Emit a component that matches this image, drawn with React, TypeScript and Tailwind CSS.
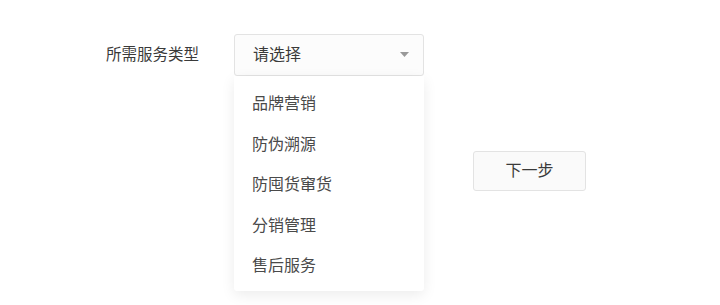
import * as React from 'react';

const options = ['品牌营销', '防伪溯源', '防囤货窜货', '分销管理', '售后服务'];

export default function App() {
  return (
    <div
      className="w-[720px] h-[305px] bg-white text-[#333] overflow-hidden"
      style={{ fontFamily: '"Liberation Sans", "Noto Sans CJK SC", sans-serif' }}
    >
      <div className="pt-[34px] pl-[106px]">
        {/* form row */}
        <div className="flex items-center">
          <label className="w-[128px] text-[15.5px] leading-[42px] text-[#3a3a3a]">所需服务类型</label>
          <div className="relative">
            <div className="flex items-center justify-between w-[190px] h-[42px] pl-[18px] pr-[14px] border border-[#e3e3e3] rounded-[3px] bg-[#fcfcfc]">
              <span className="text-[16px] text-[#3a3a3a]">请选择</span>
              <svg width="9" height="5" viewBox="0 0 9 5" className="mt-[-1px]">
                <path d="M0 0 L9 0 L4.5 5 Z" fill="#999" />
              </svg>
            </div>
            {/* dropdown */}
            <ul className="absolute left-0 top-[42px] w-[190px] bg-white rounded-b-[3px] shadow-[0_4px_14px_rgba(0,0,0,0.08)] pt-[8px] pb-[4px] z-10">
              {options.map((o) => (
                <li key={o} className="h-[40.5px] flex items-center pl-[18px] text-[16px] text-[#4a4a4a]">
                  {o}
                </li>
              ))}
            </ul>
          </div>
        </div>
        {/* next button */}
        <div className="mt-[75px] pl-[367px]">
          <button className="w-[113px] h-[40px] border border-[#e3e3e3] rounded-[3px] bg-[#fafafa] text-[16px] text-[#3a3a3a]">
            下一步
          </button>
        </div>
      </div>
    </div>
  );
}
